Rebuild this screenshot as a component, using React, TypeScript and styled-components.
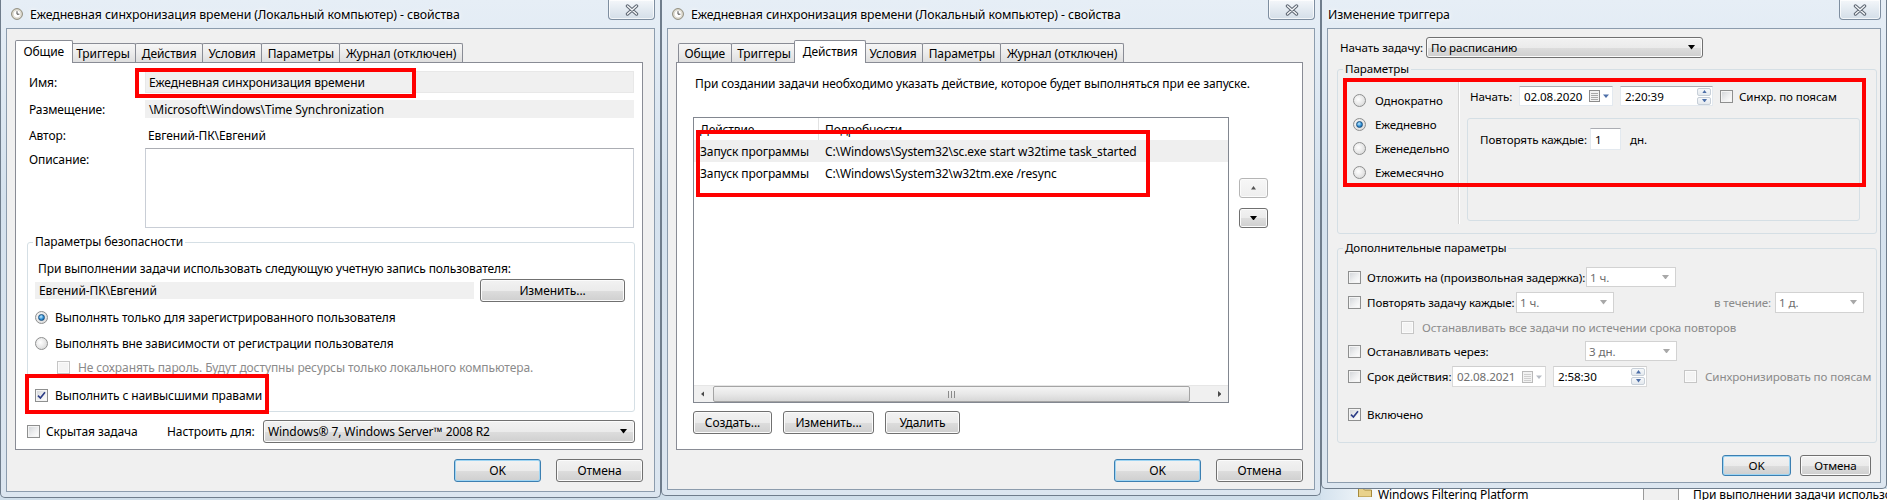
import React from "react";
import styled, { createGlobalStyle } from "styled-components";

const GlobalStyle = createGlobalStyle`
  html, body { margin: 0; padding: 0; background: #ffffff; }
  body { font-family: "Noto Sans", "Open Sans", sans-serif; font-size: 12px; letter-spacing: -0.1px; color: #000; }
  *, *::before, *::after { box-sizing: border-box; }
`;

const Page = styled.div`
  display: flex;
  align-items: flex-start;
  width: 1887px;
  height: 500px;
  overflow: hidden;
  background: linear-gradient(180deg, #e3ecf4 0%, #cfdeea 100%);
`;

const Column = styled.div`
  display: flex;
  flex-direction: column;
  flex: none;
`;

const Frame = styled.div<{ $w: number; $h: number }>`
  position: relative;
  flex: none;
  width: ${(p) => p.$w}px;
  height: ${(p) => p.$h}px;
  display: flex;
  flex-direction: column;
  padding: 0 5px 5px;
  border: 1px solid #6f7d8c;
  border-top: 0;
  border-radius: 0 0 5px 5px;
  background: linear-gradient(180deg, #e6eef6 0%, #d5e2ee 40%, #dce6f0 100%);
`;

const TitleBar = styled.div<{ $pad: number }>`
  height: 28px;
  flex: none;
  display: flex;
  align-items: center;
  gap: 7px;
  padding-left: ${(p) => p.$pad}px;
`;

const Title = styled.span`
  font-size: 12.3px;
  white-space: nowrap;
  color: #000;
  text-shadow: 0 0 6px #fff, 0 0 3px #fff;
`;

const CloseBtn = styled.div<{ $w: number }>`
  margin-left: auto;
  align-self: flex-start;
  width: ${(p) => p.$w}px;
  height: 20px;
  display: flex;
  align-items: center;
  justify-content: center;
  border: 1px solid #7e8ea0;
  border-top: 0;
  border-radius: 0 0 4px 4px;
  background: linear-gradient(180deg, #f4f7fa 0%, #e3eaf1 50%, #d4dee8 100%);
  box-shadow: inset 0 0 0 1px rgba(255, 255, 255, 0.7);
`;

const Body = styled.div<{ $pad: string; $fs?: number }>`
  flex: 1;
  display: flex;
  flex-direction: column;
  padding: ${(p) => p.$pad};
  font-size: ${(p) => p.$fs ?? 12}px;
  background: #f0f0f0;
  border: 1px solid #8c9cad;
`;

const TabStrip = styled.div`
  height: 22px;
  display: flex;
  align-items: flex-end;
  padding-left: 2px;
`;

const Tab = styled.div<{ $active?: boolean }>`
  position: relative;
  z-index: ${(p) => (p.$active ? 2 : 1)};
  height: ${(p) => (p.$active ? 23 : 19)}px;
  margin: ${(p) => (p.$active ? "0 -3px -1px -2px" : "0 -1px 0 0")};
  padding: ${(p) => (p.$active ? "0 7.5px 2px" : "0 5.5px")};
  display: flex;
  align-items: center;
  white-space: nowrap;
  border: 1px solid #898c95;
  border-bottom: 0;
  border-radius: 2px 2px 0 0;
  background: ${(p) =>
    p.$active ? "#ffffff" : "linear-gradient(180deg, #f6f6f6 0%, #ececec 50%, #dedede 100%)"};
`;

const TabPanel = styled.div<{ $h: number }>`
  position: relative;
  height: ${(p) => p.$h}px;
  display: flex;
  flex-direction: column;
  background: #ffffff;
  border: 1px solid #898c95;
`;

const Footer = styled.div<{ $top: number; $gap: number; $right: number }>`
  display: flex;
  justify-content: flex-end;
  gap: ${(p) => p.$gap}px;
  padding-top: ${(p) => p.$top}px;
  padding-right: ${(p) => p.$right}px;
`;

const Button = styled.div<{ $w: number; $h?: number; $default?: boolean }>`
  flex: none;
  width: ${(p) => p.$w}px;
  height: ${(p) => p.$h ?? 23}px;
  display: flex;
  align-items: center;
  justify-content: center;
  white-space: nowrap;
  border: 1px solid ${(p) => (p.$default ? "#3c7fb1" : "#707070")};
  border-radius: 3px;
  background: linear-gradient(180deg, #f2f2f2 0%, #ebebeb 50%, #dddddd 51%, #cfcfcf 100%);
  box-shadow: inset 0 0 0 1px ${(p) => (p.$default ? "#9fd5f3" : "#fbfbfb")};
`;

const SmallButton = styled.div<{ $disabled?: boolean }>`
  width: 29px;
  height: 20px;
  display: flex;
  align-items: center;
  justify-content: center;
  border: 1px solid ${(p) => (p.$disabled ? "#b5b5b5" : "#707070")};
  border-radius: 3px;
  background: ${(p) =>
    p.$disabled
      ? "linear-gradient(180deg, #f7f7f7, #eeeeee)"
      : "linear-gradient(180deg, #f2f2f2 0%, #ebebeb 50%, #dddddd 51%, #cfcfcf 100%)"};
  box-shadow: inset 0 0 0 1px #fbfbfb;
`;

const Annotation = styled.div<{ $x: number; $y: number; $w: number; $h: number }>`
  position: absolute;
  left: ${(p) => p.$x}px;
  top: ${(p) => p.$y}px;
  width: ${(p) => p.$w}px;
  height: ${(p) => p.$h}px;
  border: 4px solid #ff0000;
  z-index: 10;
  pointer-events: none;
`;

/* ---------- form controls ---------- */

const Box = styled.span<{ $disabled?: boolean }>`
  flex: none;
  width: 13px;
  height: 13px;
  display: inline-flex;
  align-items: center;
  justify-content: center;
  border: 1px solid ${(p) => (p.$disabled ? "#c6c6c6" : "#8e8f8f")};
  background: ${(p) =>
    p.$disabled ? "#f4f4f4" : "linear-gradient(135deg, #d0d3d7 0%, #eeeff0 55%, #ffffff 100%)"};
  box-shadow: inset 0 0 0 1px ${(p) => (p.$disabled ? "#fbfbfb" : "#f4f4f4")};
`;

const RadioDot = styled.span<{ $on?: boolean }>`
  flex: none;
  width: 13px;
  height: 13px;
  border-radius: 50%;
  display: inline-flex;
  align-items: center;
  justify-content: center;
  border: 1px solid #8e8f8f;
  background: radial-gradient(circle at 40% 40%, #ffffff 0%, #e6e6e6 55%, #cfcfcf 100%);
  &::after {
    content: "";
    display: ${(p) => (p.$on ? "block" : "none")};
    width: 7px;
    height: 7px;
    border-radius: 50%;
    border: 1px solid #1c5180;
    background: radial-gradient(circle at 40% 35%, #c4ecff 0%, #2e8fd6 55%, #0f4f8e 100%);
  }
`;

const Option = styled.div<{ $gap: number; $muted?: boolean }>`
  display: flex;
  align-items: center;
  gap: ${(p) => p.$gap}px;
  white-space: nowrap;
  color: ${(p) => (p.$muted ? "#8b8b8b" : "#000")};
`;

const Line = styled.div<{ $h: number; $mt?: number; $ml?: number; $gap?: number }>`
  display: flex;
  align-items: center;
  height: ${(p) => p.$h}px;
  margin-top: ${(p) => p.$mt ?? 0}px;
  margin-left: ${(p) => p.$ml ?? 0}px;
  gap: ${(p) => p.$gap ?? 0}px;
  white-space: nowrap;
`;

const GridLine = styled.div<{ $cols: string; $h: number; $mt?: number; $ml?: number }>`
  display: grid;
  grid-template-columns: ${(p) => p.$cols};
  align-items: center;
  height: ${(p) => p.$h}px;
  margin-top: ${(p) => p.$mt ?? 0}px;
  margin-left: ${(p) => p.$ml ?? 0}px;
  white-space: nowrap;
`;

const Muted = styled.span`
  color: #8b8b8b;
`;

const ReadField = styled.div<{ $h: number }>`
  height: ${(p) => p.$h}px;
  display: flex;
  align-items: center;
  padding-left: 3px;
  background: #f0f0f0;
  border: 1px solid ${(p) => (p.$h > 20 ? "#e8e8e8" : "#f0f0f0")};
  white-space: nowrap;
  overflow: hidden;
`;

const Plain = styled.div`
  padding-left: 3px;
`;

const TextArea = styled.div`
  height: 80px;
  background: #fff;
  border: 1px solid #c9ced6;
  border-top-color: #abadb3;
`;

const Group = styled.fieldset<{ $m: string; $pb?: number }>`
  margin: ${(p) => p.$m};
  padding: 0 0 ${(p) => p.$pb ?? 0}px;
  min-width: 0;
  border: 1px solid #d5dfe5;
  border-radius: 3px;
`;

const Legend = styled.legend`
  margin-left: 5px;
  padding: 0 2px;
  line-height: 16px;
  white-space: nowrap;
`;

const Combo = styled.div<{ $w?: number; $h: number }>`
  width: ${(p) => (p.$w ? `${p.$w}px` : "auto")};
  height: ${(p) => p.$h}px;
  display: flex;
  align-items: center;
  justify-content: space-between;
  padding: 0 7px 0 4px;
  white-space: nowrap;
  border: 1px solid #707070;
  border-radius: 3px;
  background: linear-gradient(180deg, #f2f2f2 0%, #ebebeb 50%, #dddddd 51%, #cfcfcf 100%);
  box-shadow: inset 0 0 0 1px #fbfbfb;
`;

const DimCombo = styled.div<{ $w: number; $h: number }>`
  width: ${(p) => p.$w}px;
  height: ${(p) => p.$h}px;
  display: flex;
  align-items: center;
  justify-content: space-between;
  padding: 0 6px 0 3px;
  color: #6d6d6d;
  white-space: nowrap;
  background: #ffffff;
  border: 1px solid #d2d2d2;
`;

const Input = styled.div<{ $w: number; $h: number; $dim?: boolean }>`
  flex: none;
  width: ${(p) => p.$w}px;
  height: ${(p) => p.$h}px;
  display: flex;
  align-items: center;
  justify-content: space-between;
  padding: 0 1px 0 4px;
  color: ${(p) => (p.$dim ? "#6d6d6d" : "#000")};
  white-space: nowrap;
  background: #ffffff;
  border: 1px solid ${(p) => (p.$dim ? "#d9d9d9" : "#e3e9ef")};
  border-top-color: ${(p) => (p.$dim ? "#cfcfcf" : "#abadb3")};
`;

const Spin = styled.div`
  display: flex;
  flex-direction: column;
  gap: 1px;
  width: 14px;
  height: 17px;
`;

const SpinHalf = styled.div`
  flex: 1;
  display: flex;
  align-items: center;
  justify-content: center;
  border: 1px solid #c7cfd8;
  border-radius: 2px;
  background: linear-gradient(180deg, #f6f8fa, #e4e9ee);
`;

/* ---------- list view ---------- */

const ListArea = styled.div`
  display: flex;
  align-items: flex-start;
  gap: 10px;
  margin-top: 26px;
`;

const ListView = styled.div`
  width: 536px;
  height: 286px;
  display: flex;
  flex-direction: column;
  background: #ffffff;
  border: 1px solid #828790;
`;

const ListRow = styled.div<{ $h: number; $bg?: string }>`
  display: grid;
  grid-template-columns: 125px 1fr;
  align-items: center;
  height: ${(p) => p.$h}px;
  background: ${(p) => p.$bg ?? "transparent"};
  white-space: nowrap;
`;

const Cell = styled.div<{ $sep?: boolean }>`
  height: 100%;
  display: flex;
  align-items: center;
  padding-left: 6px;
  border-right: ${(p) => (p.$sep ? "1px solid #e2e2e2" : "0")};
  overflow: hidden;
`;

const HScroll = styled.div`
  margin-top: auto;
  height: 17px;
  display: flex;
  align-items: stretch;
  background: #f0f0f0;
  border-top: 1px solid #e6e6e6;
`;

const ScrollArrow = styled.div`
  width: 17px;
  flex: none;
  display: flex;
  align-items: center;
  justify-content: center;
`;

const ScrollThumb = styled.div`
  width: 477px;
  flex: none;
  margin: 0 2px;
  display: flex;
  align-items: center;
  justify-content: center;
  border: 1px solid #a4a4a4;
  border-radius: 2px;
  background: linear-gradient(180deg, #f4f4f4 0%, #e8e8e8 50%, #d7d7d7 100%);
`;

const ScrollTrack = styled.div`
  flex: 1;
`;

const MoveButtons = styled.div`
  display: flex;
  flex-direction: column;
  gap: 10px;
  margin-top: 61px;
`;

/* ---------- trigger dialog ---------- */

const ScheduleRow = styled.div`
  display: flex;
`;

const KindColumn = styled.div`
  width: 121px;
  height: 142px;
  margin-top: 5px;
  padding: 6px 0 0 15px;
  border-right: 1px solid #d5d5d5;
  box-shadow: 1px 0 0 #ffffff;
`;

const KindOption = styled(Option)`
  height: 24px;
`;

const ScheduleMain = styled.div`
  display: flex;
  flex-direction: column;
  padding: 9px 0 0 11px;
`;

const RecurBox = styled.div`
  width: 393px;
  height: 103px;
  margin: 12px 0 0 -3px;
  padding: 9px 0 0 12px;
  border: 1px solid #d5dfe5;
  border-radius: 3px;
`;

const Underlay = styled.div`
  position: relative;
  width: 566px;
  height: 11px;
  display: flex;
  align-items: flex-start;
  overflow: hidden;
  background: linear-gradient(90deg, #d4e2ee 0%, #ffffff 12%);
`;

const UnderItem = styled.div<{ $w: number }>`
  width: ${(p) => p.$w}px;
  flex: none;
  display: flex;
  align-items: flex-start;
  gap: 6px;
  margin-top: -2px;
  white-space: nowrap;
  line-height: 16px;
`;

const UnderScroll = styled.div`
  width: 36px;
  height: 11px;
  flex: none;
  border-left: 1px solid #9a9a9a;
  border-right: 1px solid #9a9a9a;
  background: #f0f0f0;
`;

/* ---------- icons ---------- */

const ClockIcon = () => (
  <svg width="12" height="12" viewBox="0 0 12 12">
    <circle cx="6" cy="6" r="5.4" fill="#e6e2d6" stroke="#8a8778" />
    <circle cx="6" cy="6" r="3.9" fill="#ffffff" stroke="#c9c6b8" strokeWidth="0.6" />
    <path d="M6 3.2 V6.2 H8.4" stroke="#4a4a4a" strokeWidth="1" fill="none" />
  </svg>
);

const CloseX = () => (
  <svg width="14" height="12" viewBox="0 0 14 12">
    <path d="M2.5 2 L11.5 10 M11.5 2 L2.5 10" stroke="#5d6672" strokeWidth="3.4" strokeLinecap="round" />
    <path d="M2.5 2 L11.5 10 M11.5 2 L2.5 10" stroke="#f6f8fa" strokeWidth="1.4" strokeLinecap="round" />
  </svg>
);

const Tri = ({ dir, color = "#000", size = 7 }: { dir: "up" | "down" | "left" | "right"; color?: string; size?: number }) => {
  const h = Math.ceil(size / 2) + 0.5;
  const d = {
    down: `M0 0 H${size} L${size / 2} ${h} Z`,
    up: `M0 ${h} H${size} L${size / 2} 0 Z`,
    left: `M${h} 0 V${size} L0 ${size / 2} Z`,
    right: `M0 0 V${size} L${h} ${size / 2} Z`,
  }[dir];
  const vertical = dir === "up" || dir === "down";
  return (
    <svg width={vertical ? size : h} height={vertical ? h : size}>
      <path d={d} fill={color} />
    </svg>
  );
};

const CheckMark = () => (
  <svg width="9" height="9" viewBox="0 0 9 9">
    <path d="M1 4.6 L3.4 7 L8 1.2" stroke="#2b3c86" strokeWidth="1.6" fill="none" />
  </svg>
);

const Grip = () => (
  <svg width="7" height="7" viewBox="0 0 7 7">
    <path d="M0.5 0 V7 M3.5 0 V7 M6.5 0 V7" stroke="#8a8a8a" strokeWidth="1" />
  </svg>
);

const CalendarPick = ({ dim }: { dim?: boolean }) => (
  <svg width="22" height="12" viewBox="0 0 22 12">
    <rect x="0.5" y="0.5" width="10" height="11" fill="#f2f2f2" stroke={dim ? "#b9b9b9" : "#8c8c8c"} />
    <path d="M2 3.5 H9 M2 5.5 H9 M2 7.5 H9 M2 9.5 H9" stroke={dim ? "#cfcfcf" : "#a9a9a9"} />
    <path d="M14 4.5 H20 L17 8 Z" fill={dim ? "#b7bcc4" : "#4d6fa8"} />
  </svg>
);

const FolderIcon = () => (
  <svg width="14" height="10" viewBox="0 0 14 10">
    <path d="M0.5 1.5 H5 L6.5 3 H13.5 V10 H0.5 Z" fill="#e9d28c" stroke="#a68a3c" />
  </svg>
);

/* ---------- pieces ---------- */

const Check = ({ on, disabled }: { on?: boolean; disabled?: boolean }) => (
  <Box $disabled={disabled}>{on && <CheckMark />}</Box>
);

const SpinButtons = () => (
  <Spin>
    <SpinHalf>
      <Tri dir="up" color="#4d6fa8" size={5} />
    </SpinHalf>
    <SpinHalf>
      <Tri dir="down" color="#4d6fa8" size={5} />
    </SpinHalf>
  </Spin>
);

const Tabs = ({ active }: { active: string }) => (
  <TabStrip>
    {["Общие", "Триггеры", "Действия", "Условия", "Параметры", "Журнал (отключен)"].map((t) => (
      <Tab key={t} $active={t === active}>
        {t}
      </Tab>
    ))}
  </TabStrip>
);

const PropertiesTitle = () => (
  <TitleBar $pad={5}>
    <ClockIcon />
    <Title>Ежедневная синхронизация времени (Локальный компьютер) - свойства</Title>
    <CloseBtn $w={47}>
      <CloseX />
    </CloseBtn>
  </TitleBar>
);

const GeneralPane = styled.div`
  display: flex;
  flex-direction: column;
  padding: 8px 8px 0 13px;
`;

const GroupBody = styled.div`
  display: flex;
  flex-direction: column;
  padding: 9px 7px 0 7px;
`;

const GeneralWindow = () => (
  <Frame $w={661} $h={498}>
    <PropertiesTitle />
    <Body $pad="11px 11px 0 8px">
      <Tabs active="Общие" />
      <TabPanel $h={388}>
        <GeneralPane>
          <GridLine $cols="116px 1fr" $h={22}>
            <span>Имя:</span>
            <ReadField $h={22}>Ежедневная синхронизация времени</ReadField>
          </GridLine>
          <GridLine $cols="116px 1fr" $h={18} $mt={7}>
            <span>Размещение:</span>
            <ReadField $h={18}>\Microsoft\Windows\Time Synchronization</ReadField>
          </GridLine>
          <GridLine $cols="116px 1fr" $h={18} $mt={8}>
            <span>Автор:</span>
            <Plain>Евгений-ПК\Евгений</Plain>
          </GridLine>
          <GridLine $cols="116px 1fr" $h={80} $mt={4}>
            <span style={{ alignSelf: "start", paddingTop: 3 }}>Описание:</span>
            <TextArea />
          </GridLine>
          <Group $m="6px -1px 0 -2px" $pb={7}>
            <Legend>Параметры безопасности</Legend>
            <GroupBody>
              <Line $h={18} $ml={3}>
                При выполнении задачи использовать следующую учетную запись пользователя:
              </Line>
              <Line $h={23} $mt={2} $gap={6}>
                <ReadField $h={17} style={{ width: 439 }}>
                  Евгений-ПК\Евгений
                </ReadField>
                <Button $w={145}>Изменить...</Button>
              </Line>
              <Line $h={18} $mt={6}>
                <Option $gap={7}>
                  <RadioDot $on />
                  Выполнять только для зарегистрированного пользователя
                </Option>
              </Line>
              <Line $h={18} $mt={8}>
                <Option $gap={7}>
                  <RadioDot />
                  Выполнять вне зависимости от регистрации пользователя
                </Option>
              </Line>
              <Line $h={18} $mt={6} $ml={22}>
                <Option $gap={8} $muted>
                  <Check disabled />
                  Не сохранять пароль. Будут доступны ресурсы только локального компьютера.
                </Option>
              </Line>
              <Line $h={18} $mt={10}>
                <Option $gap={7}>
                  <Check on />
                  Выполнить с наивысшими правами
                </Option>
              </Line>
            </GroupBody>
          </Group>
          <GridLine $cols="140px 96px 1fr" $h={23} $mt={8} $ml={-2} style={{ marginRight: -1 }}>
            <Option $gap={6}>
              <Check />
              Скрытая задача
            </Option>
            <span>Настроить для:</span>
            <Combo $h={23}>
              Windows® 7, Windows Server™ 2008 R2
              <Tri dir="down" />
            </Combo>
          </GridLine>
        </GeneralPane>
      </TabPanel>
      <Footer $top={9} $gap={15} $right={0}>
        <Button $w={87} $default>
          OK
        </Button>
        <Button $w={87}>Отмена</Button>
      </Footer>
    </Body>
    <Annotation $x={134} $y={68} $w={281} $h={30} />
    <Annotation $x={24} $y={374} $w={244} $h={40} />
  </Frame>
);

const ActionsPane = styled.div`
  display: flex;
  flex-direction: column;
  padding: 12px 0 0 16px;
`;

const ActionsWindow = () => (
  <Frame $w={660} $h={496}>
    <PropertiesTitle />
    <Body $pad="11px 11px 0 8px">
      <Tabs active="Действия" />
      <TabPanel $h={388}>
        <ActionsPane>
          <Line $h={16} $ml={2}>
            При создании задачи необходимо указать действие, которое будет выполняться при ее запуске.
          </Line>
          <ListArea>
            <ListView>
              <ListRow $h={22}>
                <Cell $sep>Действие</Cell>
                <Cell>Подробности</Cell>
              </ListRow>
              <ListRow $h={22} $bg="#efefef">
                <Cell>Запуск программы</Cell>
                <Cell>C:\Windows\System32\sc.exe start w32time task_started</Cell>
              </ListRow>
              <ListRow $h={22}>
                <Cell>Запуск программы</Cell>
                <Cell>C:\Windows\System32\w32tm.exe /resync</Cell>
              </ListRow>
              <HScroll>
                <ScrollArrow>
                  <Tri dir="left" color="#4a4a4a" size={6} />
                </ScrollArrow>
                <ScrollThumb>
                  <Grip />
                </ScrollThumb>
                <ScrollTrack />
                <ScrollArrow>
                  <Tri dir="right" color="#4a4a4a" size={6} />
                </ScrollArrow>
              </HScroll>
            </ListView>
            <MoveButtons>
              <SmallButton $disabled>
                <Tri dir="up" color="#555" size={5} />
              </SmallButton>
              <SmallButton>
                <Tri dir="down" color="#000" size={7} />
              </SmallButton>
            </MoveButtons>
          </ListArea>
          <Line $h={23} $mt={8} $gap={11}>
            <Button $w={79}>Создать...</Button>
            <Button $w={91}>Изменить...</Button>
            <Button $w={75}>Удалить</Button>
          </Line>
        </ActionsPane>
      </TabPanel>
      <Footer $top={9} $gap={15} $right={0}>
        <Button $w={87} $default>
          OK
        </Button>
        <Button $w={87}>Отмена</Button>
      </Footer>
    </Body>
    <Annotation $x={34} $y={130} $w={454} $h={67} />
  </Frame>
);

const TriggerWindow = () => (
  <Column>
    <Frame $w={566} $h={489}>
      <TitleBar $pad={1}>
        <Title>Изменение триггера</Title>
        <CloseBtn $w={42}>
          <CloseX />
        </CloseBtn>
      </TitleBar>
      <Body $pad="8px 3px 0 9px" $fs={11.6}>
        <GridLine $cols="86px 277px" $h={21} $ml={3}>
          <span>Начать задачу:</span>
          <Combo $h={21}>
            По расписанию
            <Tri dir="down" />
          </Combo>
        </GridLine>

        <Group $m="3px 0 0 0" $pb={9}>
          <Legend>Параметры</Legend>
          <ScheduleRow>
            <KindColumn>
              <KindOption $gap={9}>
                <RadioDot />
                Однократно
              </KindOption>
              <KindOption $gap={9}>
                <RadioDot $on />
                Ежедневно
              </KindOption>
              <KindOption $gap={9}>
                <RadioDot />
                Еженедельно
              </KindOption>
              <KindOption $gap={9}>
                <RadioDot />
                Ежемесячно
              </KindOption>
            </KindColumn>
            <ScheduleMain>
              <Line $h={20}>
                <span style={{ width: 49 }}>Начать:</span>
                <Input $w={94} $h={20}>
                  02.08.2020
                  <CalendarPick />
                </Input>
                <Input $w={93} $h={20} style={{ marginLeft: 7 }}>
                  2:20:39
                  <SpinButtons />
                </Input>
                <Option $gap={6} style={{ marginLeft: 7 }}>
                  <Check />
                  Синхр. по поясам
                </Option>
              </Line>
              <RecurBox>
                <Line $h={22}>
                  <span style={{ width: 110 }}>Повторять каждые:</span>
                  <Input $w={31} $h={22}>
                    1
                  </Input>
                  <span style={{ marginLeft: 9 }}>дн.</span>
                </Line>
              </RecurBox>
            </ScheduleMain>
          </ScheduleRow>
        </Group>

        <Group $m="6px 0 0 0" $pb={19}>
          <Legend>Дополнительные параметры</Legend>
          <GridLine $cols="238px 90px" $h={20} $mt={11} $ml={10}>
            <Option $gap={6}>
              <Check />
              Отложить на (произвольная задержка):
            </Option>
            <DimCombo $w={90} $h={20}>
              1 ч.
              <Tri dir="down" color="#a8a8a8" size={7} />
            </DimCombo>
          </GridLine>
          <GridLine $cols="168px 98px 100px 61px 89px" $h={21} $mt={5} $ml={10}>
            <Option $gap={6}>
              <Check />
              Повторять задачу каждые:
            </Option>
            <DimCombo $w={98} $h={21}>
              1 ч.
              <Tri dir="down" color="#a8a8a8" size={7} />
            </DimCombo>
            <span />
            <Muted>в течение:</Muted>
            <DimCombo $w={89} $h={21}>
              1 д.
              <Tri dir="down" color="#a8a8a8" size={7} />
            </DimCombo>
          </GridLine>
          <Line $h={18} $mt={5} $ml={63}>
            <Option $gap={8} $muted>
              <Check disabled />
              Останавливать все задачи по истечении срока повторов
            </Option>
          </Line>
          <GridLine $cols="237px 92px" $h={20} $mt={5} $ml={10}>
            <Option $gap={6}>
              <Check />
              Останавливать через:
            </Option>
            <DimCombo $w={92} $h={20}>
              3 дн.
              <Tri dir="down" color="#a8a8a8" size={7} />
            </DimCombo>
          </GridLine>
          <Line $h={21} $mt={5} $ml={10}>
            <Option $gap={6} style={{ width: 104 }}>
              <Check />
              Срок действия:
            </Option>
            <Input $w={94} $h={21} $dim>
              02.08.2021
              <CalendarPick dim />
            </Input>
            <Input $w={94} $h={21} $dim style={{ marginLeft: 7, color: "#000" }}>
              2:58:30
              <SpinButtons />
            </Input>
            <Option $gap={8} $muted style={{ marginLeft: 37 }}>
              <Check disabled />
              Синхронизировать по поясам
            </Option>
          </Line>
          <Line $h={18} $mt={18} $ml={10}>
            <Option $gap={6}>
              <Check on />
              Включено
            </Option>
          </Line>
        </Group>

        <Footer $top={12} $gap={9} $right={6}>
          <Button $w={69} $h={21} $default>
            OK
          </Button>
          <Button $w={71} $h={21}>
            Отмена
          </Button>
        </Footer>
      </Body>
      <Annotation $x={21} $y={78} $w={523} $h={109} />
    </Frame>
    <Underlay>
      <span style={{ width: 37, flex: "none" }} />
      <UnderItem $w={285}>
        <FolderIcon />
        Windows Filtering Platform
      </UnderItem>
      <UnderScroll />
      <UnderItem $w={200} style={{ marginLeft: 14 }}>
        При выполнении задачи использовать следующую
      </UnderItem>
    </Underlay>
  </Column>
);

export default function App() {
  return (
    <>
      <GlobalStyle />
      <Page>
        <GeneralWindow />
        <ActionsWindow />
        <TriggerWindow />
      </Page>
    </>
  );
}
